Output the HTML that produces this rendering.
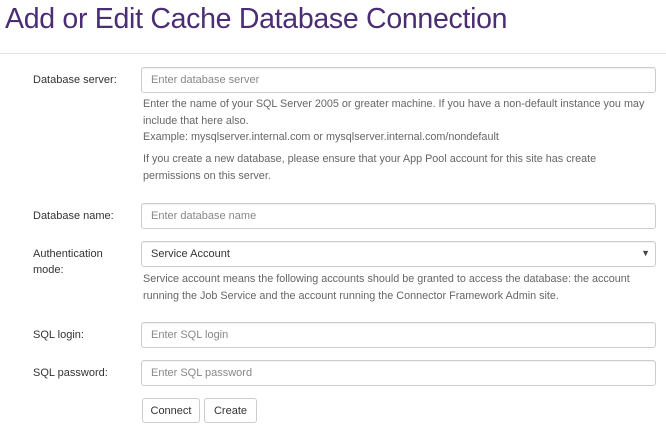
<!DOCTYPE html>
<html><head><style>
body{margin:0;background:#fff;font-family:"Liberation Sans",Arial,sans-serif;color:#333;width:666px;height:430px;overflow:hidden;position:relative}
h1{position:absolute;left:5px;top:3px;margin:0;font-weight:normal;font-size:28.5px;color:#4b2d73;letter-spacing:-0.3px}
.hr{position:absolute;left:0;right:0;top:53px;height:1px;background:#e3e3e3}
.lbl{position:absolute;left:33px;font-size:11px;color:#333;line-height:16px}
.in{position:absolute;left:141px;width:515px;height:24px;border:1px solid #ccc;border-radius:3px;box-sizing:border-box;box-shadow:inset 0 1px 1px rgba(0,0,0,.06)}
.in span{position:absolute;left:9px;top:5px;font-size:11px;color:#888}
.help{position:absolute;left:143px;font-size:10.8px;color:#666;line-height:16.5px;width:508px}
.btn{position:absolute;top:398px;height:25px;border:1px solid #ccc;border-radius:3px;box-sizing:border-box;font-size:11px;color:#333;text-align:center;line-height:24px}
</style></head><body>
<h1>Add or Edit Cache Database Connection</h1>
<div class="hr"></div>

<div class="lbl" style="top:72px">Database server:</div>
<div class="in" style="top:67px;height:26px"><span style="top:6px">Enter database server</span></div>
<div class="help" style="top:96px">Enter the name of your SQL Server 2005 or greater machine. If you have a non-default instance you may include that here also.<br>Example: mysqlserver.internal.com or mysqlserver.internal.com/nondefault</div>
<div class="help" style="top:151px;width:490px">If you create a new database, please ensure that your App Pool account for this site has create permissions on this server.</div>

<div class="lbl" style="top:208px">Database name:</div>
<div class="in" style="top:203px;height:26px"><span style="top:6px">Enter database name</span></div>

<div class="lbl" style="top:246px">Authentication<br>mode:</div>
<div class="in" style="top:241px;height:26px"><span style="top:6px;color:#333">Service Account</span><span style="left:auto;right:5px;top:6px;color:#444;font-size:9px">&#9660;</span></div>
<div class="help" style="top:271px">Service account means the following accounts should be granted to access the database: the account running the Job Service and the account running the Connector Framework Admin site.</div>

<div class="lbl" style="top:327px">SQL login:</div>
<div class="in" style="top:322px;height:26px"><span style="top:6px">Enter SQL login</span></div>

<div class="lbl" style="top:365px">SQL password:</div>
<div class="in" style="top:360px;height:26px"><span style="top:6px">Enter SQL password</span></div>

<div class="btn" style="left:142px;width:58px">Connect</div>
<div class="btn" style="left:204px;width:53px">Create</div>
</body></html>
